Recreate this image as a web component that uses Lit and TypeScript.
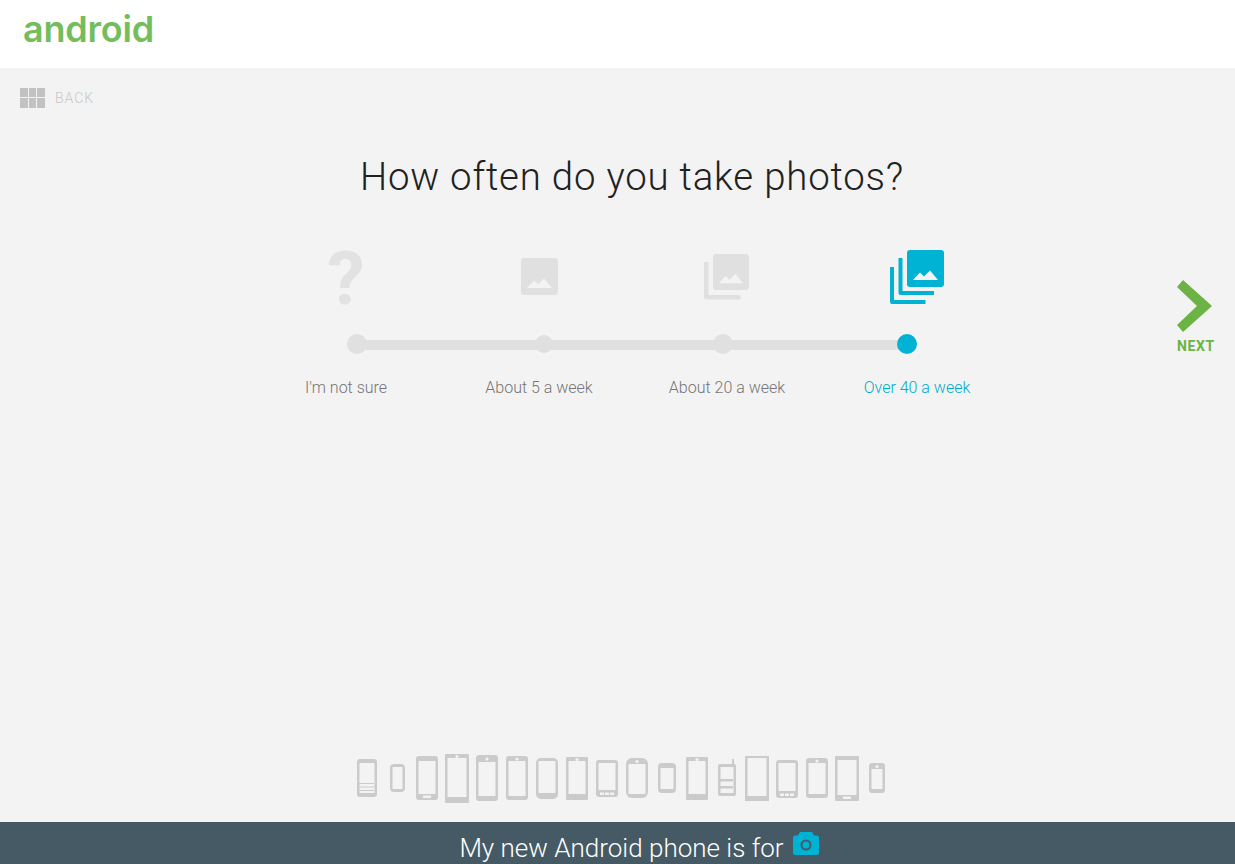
import { LitElement, html, css, svg } from "lit";
import { customElement } from "lit/decorators.js";

type Phone = { x: number; y: number; w: number; h: number; top: number; bot: number; r: number; kind?: string };

const BG = "#f3f3f3";
const BLUE = "#00b3d4";

const PHONES: Phone[] = [
  { x: 357, y: 759, w: 20, h: 38, top: 4, bot: 4, r: 3, kind: "keys" },
  { x: 390, y: 764, w: 15, h: 28, top: 3, bot: 3, r: 4 },
  { x: 416, y: 756, w: 22, h: 44, top: 5, bot: 6, r: 3, kind: "home" },
  { x: 445, y: 754, w: 24, h: 49, top: 4, bot: 6, r: 1, kind: "cam" },
  { x: 476, y: 755, w: 22, h: 46, top: 7, bot: 5, r: 3, kind: "cam" },
  { x: 506, y: 756, w: 22, h: 44, top: 5, bot: 4, r: 3, kind: "cam" },
  { x: 536, y: 758, w: 22, h: 41, top: 3, bot: 6, r: 5 },
  { x: 566, y: 757, w: 22, h: 43, top: 4, bot: 6, r: 1, kind: "cam" },
  { x: 596, y: 760, w: 22, h: 37, top: 3, bot: 7, r: 3, kind: "btns" },
  { x: 626, y: 758, w: 22, h: 40, top: 6, bot: 4, r: 6, kind: "cam" },
  { x: 658, y: 763, w: 18, h: 30, top: 5, bot: 4, r: 4 },
  { x: 686, y: 757, w: 22, h: 43, top: 4, bot: 6, r: 1, kind: "cam" },
  { x: 718, y: 759, w: 18, h: 37, top: 3, bot: 3, r: 2, kind: "radio" },
  { x: 745, y: 756, w: 24, h: 45, top: 2, bot: 5, r: 0 },
  { x: 776, y: 760, w: 22, h: 38, top: 3, bot: 7, r: 3, kind: "btns" },
  { x: 806, y: 758, w: 22, h: 40, top: 5, bot: 4, r: 3, kind: "cam" },
  { x: 835, y: 756, w: 24, h: 45, top: 4, bot: 6, r: 1, kind: "home" },
  { x: 869, y: 763, w: 16, h: 30, top: 6, bot: 4, r: 3, kind: "cam" },
];

const STEPS = [
  { label: "I'm not sure", icon: 346, dot: 357, text: 346, r: 10 },
  { label: "About 5 a week", icon: 539, dot: 544, text: 539, r: 9 },
  { label: "About 20 a week", icon: 727, dot: 723, text: 727, r: 10 },
  { label: "Over 40 a week", icon: 917, dot: 907, text: 917, r: 10 },
];

function photo(x: number, y: number, s: number, fill: string, hole: string) {
  const k = s / 37;
  return svg`
    <rect x=${x} y=${y} width=${s} height=${s} rx=${3 * k} fill=${fill}></rect>
    <polygon points="${x + 6 * k},${y + 30 * k} ${x + 13 * k},${y + 22.5 * k} ${x + 17 * k},${y + 26.5 * k} ${x + 23 * k},${y + 20.5 * k} ${x + 31 * k},${y + 30 * k}" fill=${hole}></polygon>`;
}

function phone(p: Phone, i: number) {
  const c = "#cbcbcb";
  const { w, h, top, bot, r, kind } = p;
  const bodyY = kind === "radio" ? 5 : 0;
  const bodyH = h - bodyY;
  const side = 2.5;
  const inner = w - side * 2;
  const prev = PHONES[i - 1];
  const gap = prev ? p.x - prev.x - prev.w : 0;
  const kids: unknown[] = [];
  if (kind === "cam") kids.push(svg`<circle cx=${w / 2} cy=${Math.max(top / 2 + 0.5, 2)} r="1.6" fill=${BG}></circle>`);
  if (kind === "home") kids.push(svg`<rect x=${w / 2 - 4} y=${h - bot + 1.5} width="8" height="2.5" fill=${BG}></rect>`);
  if (kind === "btns")
    kids.push(svg`<rect x="4" y=${h - bot + 2.5} width="4" height="2.5" fill=${BG}></rect>
      <rect x=${w / 2 - 2} y=${h - bot + 2.5} width="4" height="2.5" fill=${BG}></rect>
      <rect x=${w - 8} y=${h - bot + 2.5} width="4" height="2.5" fill=${BG}></rect>`);
  if (kind === "keys")
    kids.push(svg`<g fill=${c}><rect x="2" y="24" width=${inner} height="1"></rect><rect x="2" y="27.5" width=${inner} height="1"></rect><rect x="2" y="31" width=${inner} height="1"></rect></g>`);
  if (kind === "radio")
    kids.push(svg`<rect x=${w - 4} y="0" width="2" height="6" fill=${c}></rect>
      <g fill=${c}><rect x="2" y="20" width=${inner} height="2.5"></rect><rect x="2" y="27" width=${inner} height="2.5"></rect></g>`);
  return html`<svg
    class="phone"
    width=${w}
    height=${h}
    viewBox="0 0 ${w} ${h}"
    style="margin-left:${gap}px;margin-top:${p.y - 754}px"
  >
    <rect x="0" y=${bodyY} width=${w} height=${bodyH} rx=${r} fill=${c}></rect>
    <rect x=${side} y=${bodyY + top} width=${inner} height=${bodyH - top - bot} fill=${BG} rx="0.5"></rect>
    ${kids}
  </svg>`;
}

@customElement("app-root")
export class AppRoot extends LitElement {
  static styles = css`
    :host {
      display: block;
      height: 864px;
      font-family: Roboto, "Liberation Sans", sans-serif;
      background: #f3f3f3;
      overflow: hidden;
    }
    .page {
      display: flex;
      flex-direction: column;
      height: 864px;
    }
    header {
      height: 68px;
      background: #fff;
      flex: none;
      padding-left: 23px;
      box-sizing: border-box;
    }
    .logo {
      font-family: Inter, sans-serif;
      font-weight: 600;
      font-size: 36px;
      line-height: 58px;
      color: #74bd5c;
      letter-spacing: -0.2px;
    }
    main {
      flex: 1;
      display: flex;
      flex-direction: column;
      min-height: 0;
    }
    .back {
      display: flex;
      align-items: center;
      gap: 10px;
      padding: 19px 0 0 20px;
      height: 21px;
      font-size: 14px;
      letter-spacing: 1px;
      color: #c8c8c8;
      font-weight: 300;
    }
    .grid-icon {
      display: grid;
      grid-template-columns: repeat(3, 7.67px);
      grid-auto-rows: 9.5px;
      gap: 1px;
    }
    .grid-icon i {
      background: #c2c2c2;
    }
    h1 {
      margin: 46px 0 0;
      font-size: 38.4px;
      line-height: 46px;
      font-weight: 300;
      letter-spacing: 0.8px;
      color: #212121;
      text-align: center;
      width: 1264px;
    }
    .middle {
      display: flex;
      margin-top: 48px;
    }
    .stage {
      width: 1177px;
      flex: none;
    }
    .question {
      font-weight: 700;
      font-size: 75px;
      line-height: 61px;
      color: #e2e2e2;
    }
    .row {
      display: flex;
    }
    .icon-cell {
      width: 80px;
      height: 78px;
      flex: none;
      display: flex;
      justify-content: center;
    }
    .track {
      height: 20px;
      margin-top: 8px;
      position: relative;
      display: flex;
      align-items: center;
    }
    .line {
      position: absolute;
      left: 357px;
      width: 550px;
      top: 6px;
      height: 10px;
      background: #e0e0e0;
    }
    .dot {
      position: relative;
      flex: none;
      border-radius: 50%;
      background: #e0e0e0;
    }
    .dot.on {
      background: #00b3d4;
    }
    .labels {
      margin-top: 24px;
    }
    .label {
      width: 160px;
      flex: none;
      text-align: center;
      font-size: 16px;
      line-height: 20px;
      font-weight: 300;
      color: #757575;
    }
    .label.on {
      color: #00acc8;
    }
    .next {
      display: flex;
      flex-direction: column;
      align-items: flex-start;
      gap: 5px;
      padding-top: 32px;
      color: #6ab344;
      font-size: 14px;
      font-weight: 700;
      letter-spacing: 0.6px;
      line-height: 16px;
    }
    .next svg {
      display: block;
    }
    .phones {
      margin-top: auto;
      height: 68px;
      display: flex;
      align-items: flex-start;
      padding-left: 357px;
      flex: none;
    }
    .phone {
      flex: none;
      display: block;
    }
    footer {
      flex: none;
      height: 42px;
      background: #455a64;
      display: flex;
      justify-content: center;
      align-items: center;
      gap: 9px;
      color: #fff;
      font-size: 26px;
      font-weight: 300;
      padding: 10px 0 0 43px;
      box-sizing: border-box;
      white-space: nowrap;
    }
    footer svg {
      display: block;
      margin-top: -9px;
    }
  `;

  private renderIcon(i: number) {
    if (i === 0) return html`<span class="question">?</span>`;
    if (i === 1)
      return html`<svg width="37" height="37" viewBox="0 0 37 37" style="margin-top:${259 - 249}px">
        ${photo(0, 0, 37, "#e0e0e0", BG)}
      </svg>`;
    if (i === 2)
      return html`<svg width="46" height="46" viewBox="0 0 46 46" style="margin-top:${255 - 249}px">
        <path d="M0 8h4.500v33h32v4.500H3a3 3 0 0 1-3-3z" fill="#e0e0e0"></path>
        ${photo(9, 0, 36, "#e0e0e0", BG)}
      </svg>`;
    return html`<svg width="54" height="54" viewBox="0 0 54 54" style="margin-top:${251 - 249}px">
      <path d="M0 17h4v33h31.500v4H2a2 2 0 0 1-2-2z" fill=${BLUE}></path>
      <path d="M8.500 8h4v33h31.500v4H10.500a2 2 0 0 1-2-2z" fill=${BLUE}></path>
      ${photo(17, 0, 37, BLUE, BG)}
    </svg>`;
  }

  render() {
    const iconW = 80;
    const labelW = 160;
    return html`<div class="page">
      <header><span class="logo">android</span></header>
      <main>
        <div class="back">
          <div class="grid-icon">${Array.from({ length: 6 }, () => html`<i></i>`)}</div>
          <span>BACK</span>
        </div>
        <h1>How often do you take photos?</h1>
        <div class="middle">
          <div class="stage">
            <div class="row">
              ${STEPS.map((s, i) => {
                const prev = i ? STEPS[i - 1].icon + iconW / 2 : 0;
                return html`<div class="icon-cell" style="margin-left:${s.icon - iconW / 2 - prev}px">
                  ${this.renderIcon(i)}
                </div>`;
              })}
            </div>
            <div class="track">
              <div class="line"></div>
              ${STEPS.map((s, i) => {
                const prev = i ? STEPS[i - 1].dot + STEPS[i - 1].r : 0;
                return html`<div
                  class="dot ${i === 3 ? "on" : ""}"
                  style="width:${s.r * 2}px;height:${s.r * 2}px;margin-left:${s.dot - s.r - prev}px"
                ></div>`;
              })}
            </div>
            <div class="row labels">
              ${STEPS.map((s, i) => {
                const prev = i ? STEPS[i - 1].text + labelW / 2 : 0;
                return html`<div
                  class="label ${i === 3 ? "on" : ""}"
                  style="margin-left:${s.text - labelW / 2 - prev}px"
                >
                  ${s.label}
                </div>`;
              })}
            </div>
          </div>
          <div class="next">
            <svg width="36" height="53" viewBox="0 0 36 53">
              <polygon points="6,0 35,26 6,52 0,45 20,26 0,7" fill="#6ab344"></polygon>
            </svg>
            <span>NEXT</span>
          </div>
        </div>
        <div class="phones">${PHONES.map((p, i) => phone(p, i))}</div>
      </main>
      <footer>
        <span>My new Android phone is for</span>
        <svg width="26" height="23" viewBox="0 0 26 23">
          <path
            d="M2.500 3.500H5L7 0h12l2 3.500h2.500A2.500 2.500 0 0 1 26 6v14.500a2.500 2.500 0 0 1-2.500 2.500h-21A2.500 2.500 0 0 1 0 20.500V6a2.500 2.500 0 0 1 2.500-2.500z"
            fill=${BLUE}
          ></path>
          <circle cx="13" cy="13" r="4.500" fill="none" stroke="#455a64" stroke-width="2"></circle>
        </svg>
      </footer>
    </div>`;
  }
}
